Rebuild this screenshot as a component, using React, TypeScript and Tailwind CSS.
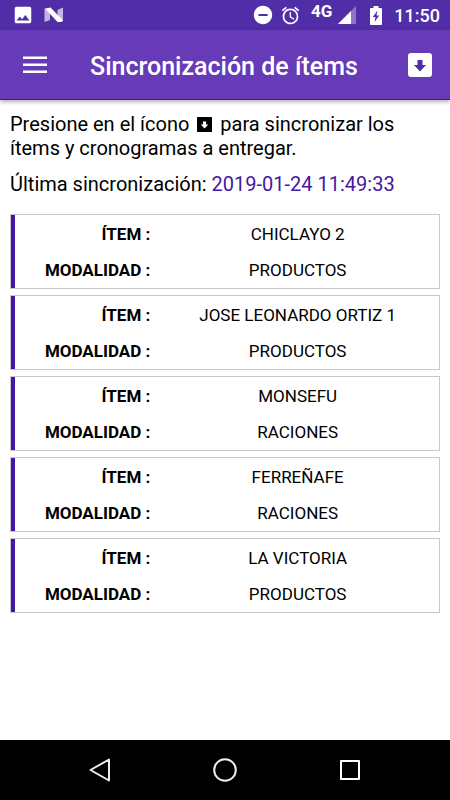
import { MdAccessAlarm, MdDoNotDisturbOn, MdImage } from 'react-icons/md'

type Item = {
    name: string
    mode: string
}

const items: Item[] = [
    { name: 'CHICLAYO 2', mode: 'PRODUCTOS' },
    { name: 'JOSE LEONARDO ORTIZ 1', mode: 'PRODUCTOS' },
    { name: 'MONSEFU', mode: 'RACIONES' },
    { name: 'FERREÑAFE', mode: 'RACIONES' },
    { name: 'LA VICTORIA', mode: 'PRODUCTOS' },
]

function NougatIcon() {
    return (
        <svg width="20" height="16" viewBox="0 0 20 16" fill="#fff">
            <path d="M.500 1.500 6 3v10L.500 15z" opacity=".65" />
            <path d="M19 .500V14l-5.500-2V3z" opacity=".65" />
            <path d="M1 1.500 6.500 .500 19 13.500 17.500 15h-4z" />
        </svg>
    )
}

function SignalIcon() {
    return (
        <svg width="18" height="18" viewBox="0 0 18 18" fill="#fff">
            <path d="M18 0v18H0z" opacity=".35" />
            <path d="M13 5v13H0z" />
        </svg>
    )
}

function BatteryIcon() {
    return (
        <svg width="12" height="19" viewBox="0 0 12 19">
            <path d="M3.500 0h5v2H11a1 1 0 0 1 1 1v15a1 1 0 0 1-1 1H1a1 1 0 0 1-1-1V3a1 1 0 0 1 1-1h2.500z" fill="#fff" />
            <path d="M7.500 4.500 2.800 11h2.700l-1 5L9.200 9.500H6.500z" fill="#512da8" />
        </svg>
    )
}

// box with a down arrow cut out, used in the toolbar and inside the text
function SyncIcon({ size, box, arrow, radius }: { size: number; box: string; arrow: string; radius: number }) {
    return (
        <svg width={size} height={size} viewBox="0 0 24 24" className="inline-block align-[-1px]">
            <rect width="24" height="24" rx={radius} fill={box} />
            <path d="M9.500 7h5v5H18l-6 6.500L6 12h3.500z" fill={arrow} />
        </svg>
    )
}

function StatusBar() {
    return (
        <div className="flex h-[30px] items-center bg-[#512da8] pr-2.5 pl-3 text-white">
            <MdImage size={22} />
            <span className="ml-2.5">
                <NougatIcon />
            </span>
            <div className="ml-auto flex items-center">
                <MdDoNotDisturbOn size={22} />
                <MdAccessAlarm size={21} className="ml-1.5" />
                <span className="ml-2.5 pb-2 text-[17px] leading-4 font-bold">4G</span>
                <span className="ml-1.5">
                    <SignalIcon />
                </span>
                <span className="ml-3.5">
                    <BatteryIcon />
                </span>
                <span className="ml-3 text-[18px] font-medium">11:50</span>
            </div>
        </div>
    )
}

function Toolbar() {
    return (
        <header className="flex h-[70px] items-center border-b border-[#4a11a0] bg-[#673ab7] pr-[18px] pl-[23px] text-white shadow-[0_2px_4px_rgba(0,0,0,0.3)]">
            <button type="button" aria-label="Menú" className="flex">
                <svg width="24" height="18" viewBox="0 0 24 18" fill="#fff">
                    <path d="M0 .500h24v2.500H0zM0 7.500h24V10H0zM0 14.500h24V17H0z" />
                </svg>
            </button>
            <h1 className="ml-[43px] pt-1 text-[25px] leading-8 font-medium">Sincronización de ítems</h1>
            <button type="button" aria-label="Sincronizar" className="ml-auto flex">
                <SyncIcon size={24} box="#fff" arrow="#512da8" radius={3} />
            </button>
        </header>
    )
}

function ItemCard({ item }: { item: Item }) {
    return (
        <li className="border border-[#c8c8c8]">
            <dl className="grid grid-cols-3 border-l-4 border-[#4517a5] pt-px text-[17px] leading-9">
                <dt className="pr-1.5 text-right font-bold">ÍTEM :</dt>
                <dd className="col-span-2 text-center">{item.name}</dd>
                <dt className="pr-1.5 text-right font-bold">MODALIDAD :</dt>
                <dd className="col-span-2 text-center">{item.mode}</dd>
            </dl>
        </li>
    )
}

function NavBar() {
    return (
        <nav className="flex h-[60px] items-center justify-center gap-[101px] bg-black">
            <button type="button" aria-label="Atrás">
                <svg width="24" height="24" viewBox="0 0 24 24" fill="none" stroke="#eee" strokeWidth="2" strokeLinejoin="round">
                    <path d="M21 1.500v21L2.500 12z" />
                </svg>
            </button>
            <button type="button" aria-label="Inicio">
                <svg width="24" height="24" viewBox="0 0 24 24" fill="none" stroke="#eee" strokeWidth="2">
                    <circle cx="12" cy="12" r="10.800" />
                </svg>
            </button>
            <button type="button" aria-label="Recientes">
                <svg width="24" height="24" viewBox="0 0 24 24" fill="none" stroke="#fff" strokeWidth="2" strokeLinejoin="round">
                    <rect x="3" y="3" width="18" height="18" />
                </svg>
            </button>
        </nav>
    )
}

export default function App() {
    return (
        <div className="flex min-h-screen flex-col bg-white font-['Roboto',sans-serif] text-black">
            <StatusBar />
            <Toolbar />
            <main className="flex-1 px-2.5 pt-3">
                <p className="text-[20px] leading-6">
                    Presione en el ícono{' '}
                    <span className="mx-[3px]">
                        <SyncIcon size={15} box="#000" arrow="#fff" radius={1} />
                    </span>{' '}
                    para sincronizar los ítems y cronogramas a entregar.
                </p>
                <p className="mt-3 text-[20px] leading-6">
                    Última sincronización: <time className="text-[#4517a5]">2019-01-24 11:49:33</time>
                </p>
                <ul className="mt-[18px] flex flex-col gap-1.5">
                    {items.map((item) => (
                        <ItemCard key={item.name} item={item} />
                    ))}
                </ul>
            </main>
            <NavBar />
        </div>
    )
}
